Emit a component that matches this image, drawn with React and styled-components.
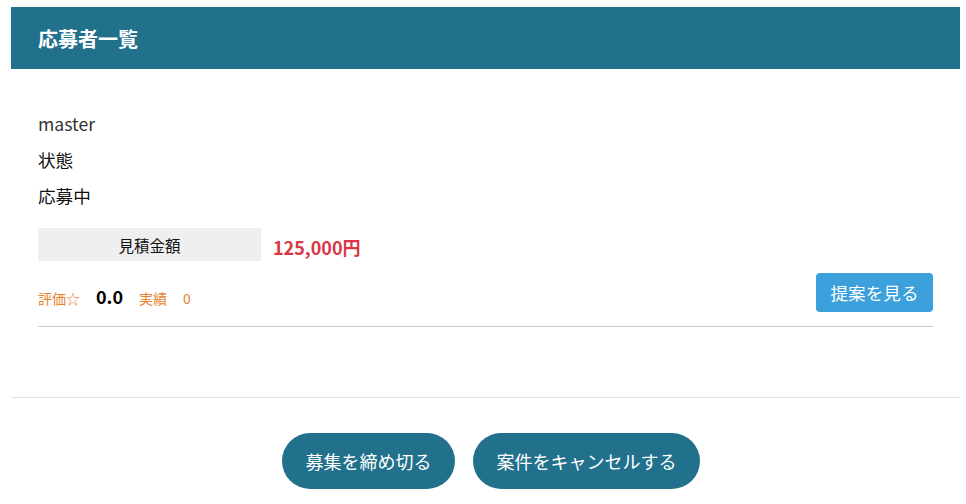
import React from 'react';
import styled, { createGlobalStyle } from 'styled-components';

const GlobalStyle = createGlobalStyle`
  body {
    margin: 0;
    background: #ffffff;
    font-family: 'Noto Sans CJK JP', 'Noto Sans', sans-serif;
    color: #222222;
  }
`;

const Page = styled.div`
  padding: 7px 6px 0 11px;
`;

const Header = styled.div`
  height: 62px;
  background-color: #21708c;
  display: flex;
  align-items: center;
  padding: 0 27px;
`;

const Title = styled.h1`
  margin: 0;
  font-size: 20px;
  font-weight: 700;
  color: #ffffff;
`;

const Body = styled.div`
  padding: 37px 27px 70px;
  border-bottom: 1px solid #e2e2e2;
`;

const Applicant = styled.div`
  border-bottom: 1px solid #cccccc;
  padding-bottom: 14px;
`;

const Line = styled.div`
  font-size: 17.6px;
  line-height: 36px;
  color: ${(p) => (p.$muted ? '#333333' : '#111111')};
`;

const PriceRow = styled.div`
  display: flex;
  align-items: center;
  gap: 12px;
  margin-top: 14px;
`;

const PriceLabel = styled.div`
  width: 223px;
  height: 33px;
  background: #efefef;
  display: flex;
  align-items: center;
  justify-content: center;
  font-size: 15.5px;
  color: #111111;
`;

const Price = styled.div`
  font-size: 18px;
  font-weight: 700;
  color: #dc3545;
  padding-top: 4px;
`;

const RatingRow = styled.div`
  display: flex;
  align-items: center;
  justify-content: space-between;
  margin-top: 12px;
`;

const Stats = styled.div`
  display: flex;
  align-items: baseline;
  padding-top: 6px;
`;

const StatLabel = styled.span`
  font-size: 14px;
  color: #e8822e;
  margin-right: ${(p) => p.$gap}px;
`;

const Score = styled.span`
  font-size: 18px;
  font-weight: 700;
  color: #000000;
  margin-right: 16px;
`;

const ViewButton = styled.button`
  width: 117px;
  height: 39px;
  border: none;
  border-radius: 4px;
  background: #3ba0db;
  color: #ffffff;
  font-family: inherit;
  font-size: 17.6px;
  cursor: pointer;
`;

const Actions = styled.div`
  display: flex;
  justify-content: center;
  gap: 18px;
  padding: 35px 0 0 11px;
`;

const PillButton = styled.button`
  height: 56px;
  padding: 0 23.5px;
  border: none;
  border-radius: 28px;
  background: #21708c;
  color: #ffffff;
  font-family: inherit;
  font-size: 18px;
  cursor: pointer;
`;

export default function App() {
  return (
    <>
      <GlobalStyle />
      <Page>
        <Header>
          <Title>応募者一覧</Title>
        </Header>
        <Body>
          <Applicant>
            <Line $muted>master</Line>
            <Line>状態</Line>
            <Line>応募中</Line>
            <PriceRow>
              <PriceLabel>見積金額</PriceLabel>
              <Price>125,000円</Price>
            </PriceRow>
            <RatingRow>
              <Stats>
                <StatLabel $gap={16}>評価☆</StatLabel>
                <Score>0.0</Score>
                <StatLabel $gap={16}>実績</StatLabel>
                <StatLabel $gap={0}>0</StatLabel>
              </Stats>
              <ViewButton>提案を見る</ViewButton>
            </RatingRow>
          </Applicant>
        </Body>
        <Actions>
          <PillButton>募集を締め切る</PillButton>
          <PillButton>案件をキャンセルする</PillButton>
        </Actions>
      </Page>
    </>
  );
}
